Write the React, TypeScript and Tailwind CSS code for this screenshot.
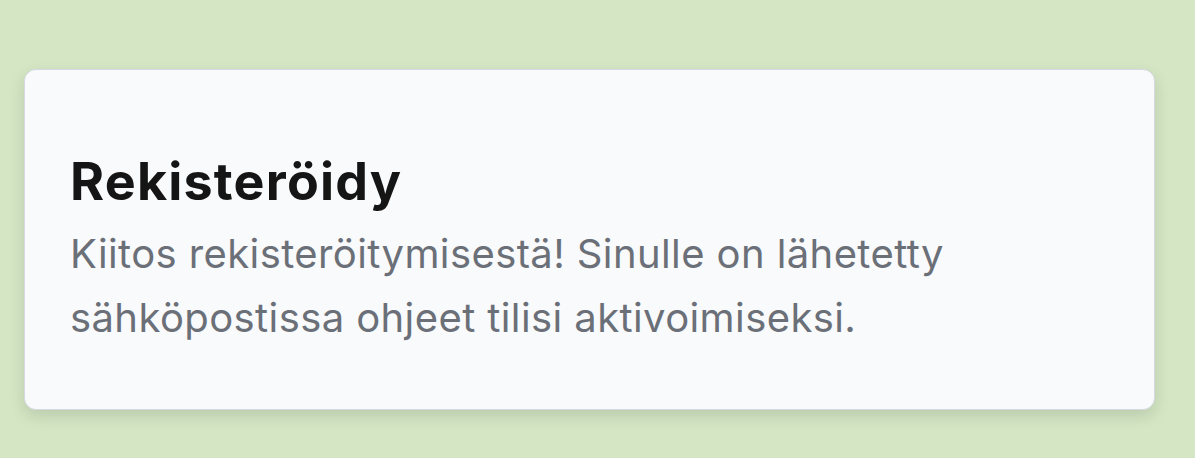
import React from "react";

export default function App() {
  return (
    <div className="min-h-[458px] w-full bg-[#d4e6c4] pt-[69px] pl-[24px]" style={{ fontFamily: "Inter, 'Noto Sans', sans-serif" }}>
      <div className="w-[1131px] h-[341px] rounded-[12px] border border-[#d5dae2] bg-[#f9fafc] shadow-[0_6px_16px_rgba(0,0,0,0.12)] pl-[45px] pt-[82px]">
        <h1 className="text-[52px] leading-[60px] font-bold text-[#151515] tracking-[1.2px]">Rekisteröidy</h1>
        <p className="mt-[10px] text-[40px] leading-[64px] text-[#6b7078] tracking-[0.4px] max-w-[1000px]">
          Kiitos rekisteröitymisestä! Sinulle on lähetetty sähköpostissa ohjeet tilisi aktivoimiseksi.
        </p>
      </div>
    </div>
  );
}
